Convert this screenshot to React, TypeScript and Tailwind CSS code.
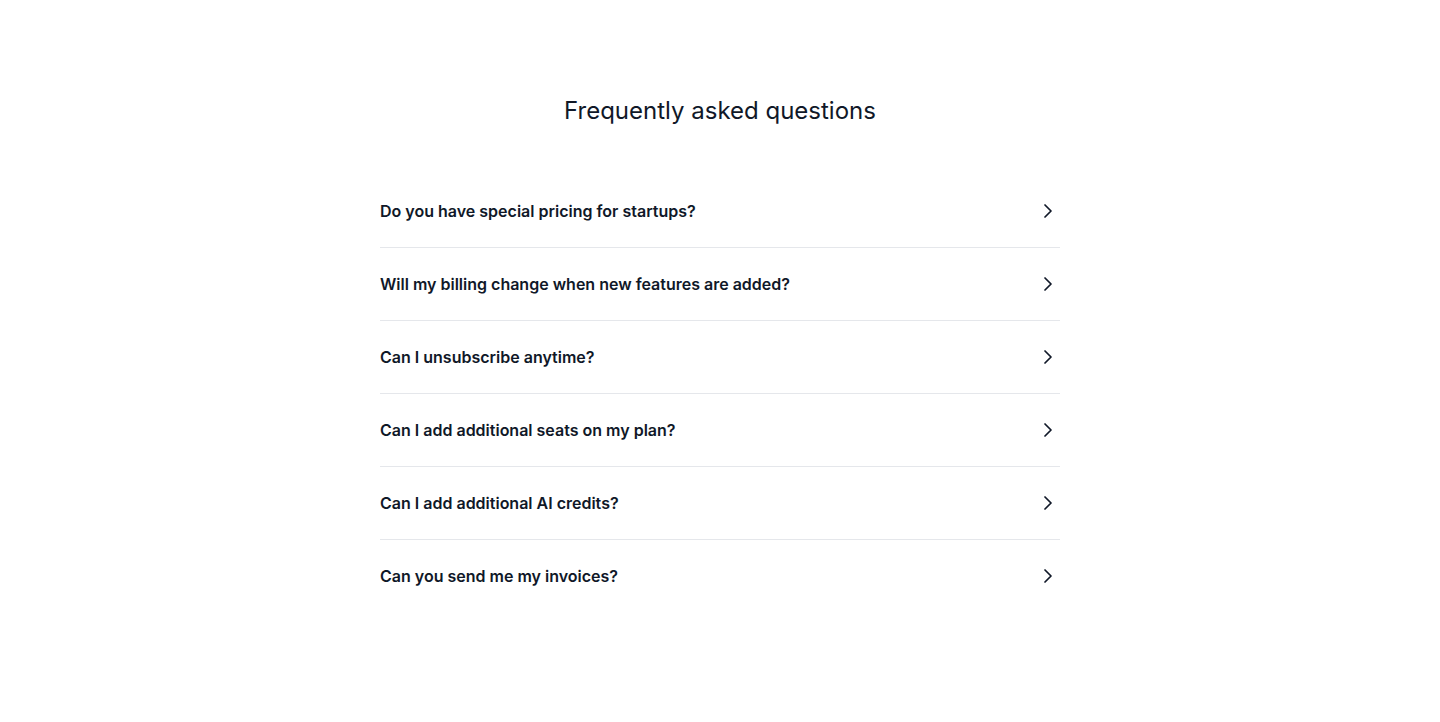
import React from 'react'
import { ChevronRight } from 'lucide-react'

const questions = [
  'Do you have special pricing for startups?',
  'Will my billing change when new features are added?',
  'Can I unsubscribe anytime?',
  'Can I add additional seats on my plan?',
  'Can I add additional AI credits?',
  'Can you send me my invoices?',
]

export default function App() {
  return (
    <div className="min-h-screen bg-white text-gray-900" style={{ fontFamily: 'Inter, "Noto Sans", sans-serif' }}>
      <div className="mx-auto w-[680px] pt-[95px] pb-24">
        <h2 className="text-center text-2xl font-normal text-gray-900">Frequently asked questions</h2>
        <div className="mt-12 flex flex-col divide-y divide-gray-200">
          {questions.map(q => (
            <button key={q} className="flex w-full items-center justify-between py-6 text-left">
              <span className="text-base font-semibold leading-6">{q}</span>
              <ChevronRight className="h-6 w-6 text-gray-900" strokeWidth={1.75} />
            </button>
          ))}
        </div>
      </div>
    </div>
  )
}
